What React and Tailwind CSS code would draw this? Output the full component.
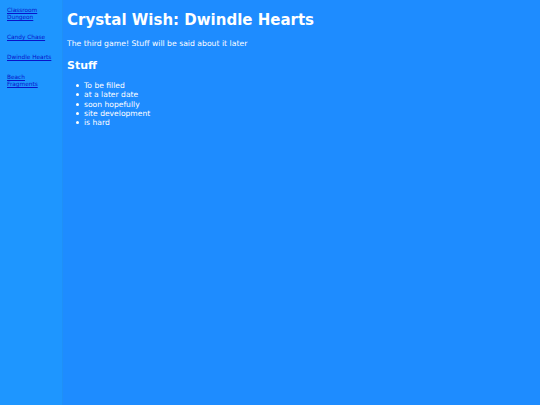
export default function App() {
  const games = ["Classroom Dungeon", "Candy Chase", "Dwindle Hearts", "Beach Fragments"];
  const stuff = ["To be filled", "at a later date", "soon hopefully", "site development", "is hard"];

  return (
    <div className="flex min-h-[405px] w-full font-['DejaVu_Sans',sans-serif] text-white">
      {/* Sidebar */}
      <nav className="w-[63px] shrink-0 bg-[#1e96ff] border-r border-[#1f90f6] pl-[7px] pr-[9px] pt-[7px]">
        {games.map((g) => (
          <div key={g} className="mb-[13px] text-[5.8px] leading-[7px]">
            <a href="#" className="text-[#0a14c8] underline">
              {g}
            </a>
          </div>
        ))}
      </nav>

      {/* Main content */}
      <main className="flex-1 bg-[#1e8cff] pl-[4px] pt-[10px]">
        <h1 className="text-[15px] leading-[20px] font-bold">Crystal Wish: Dwindle Hearts</h1>
        <p className="mt-[9px] text-[7.7px] leading-[10px]">
          The third game! Stuff will be said about it later
        </p>
        <h2 className="mt-[10px] text-[11px] leading-[14px] font-bold">Stuff</h2>
        <ul className="mt-[8px] text-[7.6px] leading-[9.3px]">
          {stuff.map((s) => (
            <li key={s} className="flex items-center">
              <span className="ml-[9px] mr-[5px] h-[3px] w-[3px] rounded-full bg-white" />
              {s}
            </li>
          ))}
        </ul>
      </main>
    </div>
  );
}
